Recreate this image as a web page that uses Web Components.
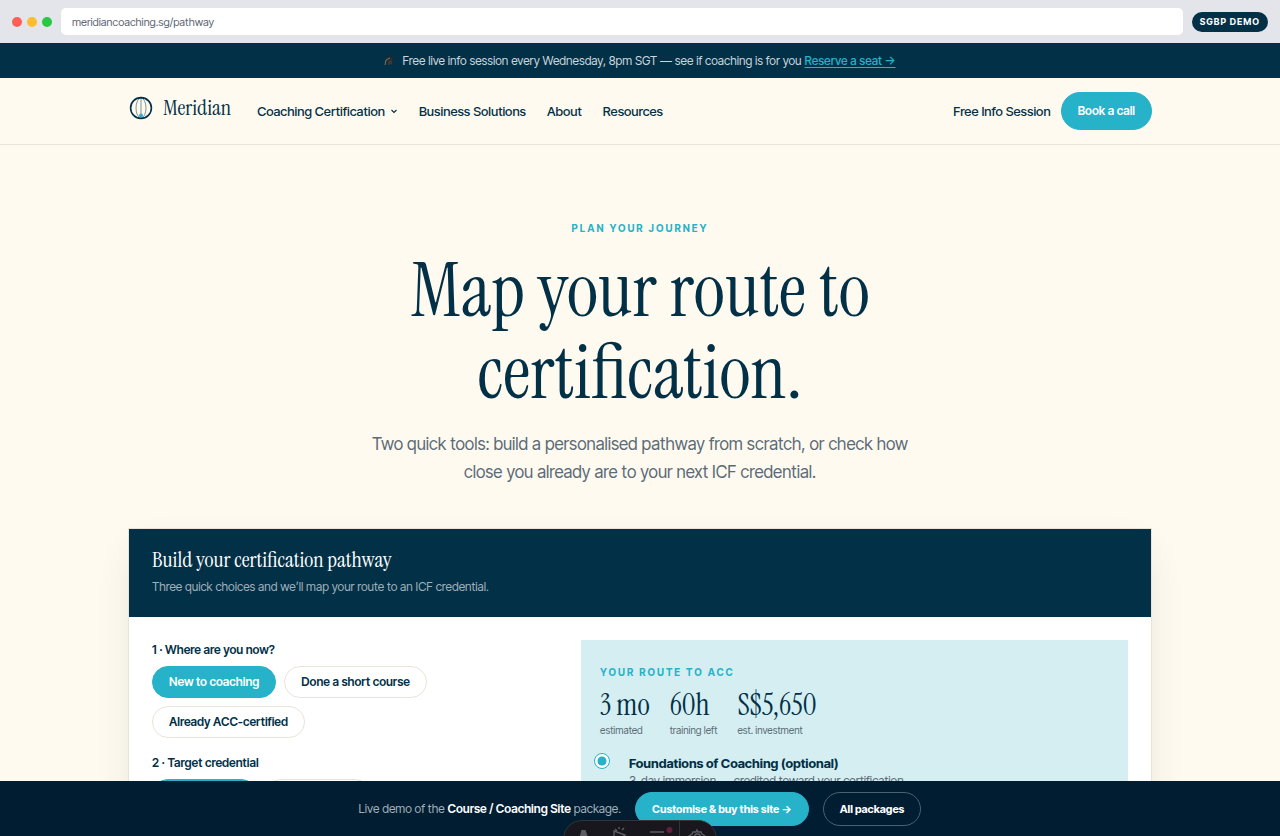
<!DOCTYPE html>
<html lang="en">
<head>
<meta charset="utf-8">
<meta name="viewport" content="width=device-width, initial-scale=1">
<title>Meridian - Map your route to certification</title>
<style>
    :root {
        --navy: #023047;
        --ink: #001d31;
        --teal: #26b2c8;
        --cream: #fffaef;
        --line: #e8e4d9;
        --muted: #5b6b77;
        --sans: "Inter Tight", Inter, "Liberation Sans", sans-serif;
        --serif: "Instrument Serif", "Liberation Serif", serif;
        --page: 1024px;
    }

    body {
        margin: 0;
        min-height: 100vh;
        background: var(--cream);
        color: var(--navy);
        font: 13px/20px var(--sans);
    }

    demo-bar b {
        color: #fff;
        font-weight: 600;
    }
</style>
</head>
<body>

<browser-bar url="meridiancoaching.sg/pathway">SGBP DEMO</browser-bar>

<info-banner>
    Free live info session every Wednesday, 8pm SGT — see if coaching is for you
    <a slot="link" href="#session">Reserve a seat →</a>
</info-banner>

<site-header name="Meridian">
    <nav-link href="#certification" menu>Coaching Certification</nav-link>
    <nav-link href="#business">Business Solutions</nav-link>
    <nav-link href="#about">About</nav-link>
    <nav-link href="#resources">Resources</nav-link>
    <nav-link slot="end" href="#session">Free Info Session</nav-link>
    <pill-link slot="end" href="#call">Book a call</pill-link>
</site-header>

<page-hero>
    <span slot="eyebrow">Plan your journey</span>
    <span slot="title">Map your route to certification.</span>
    Two quick tools: build a personalised pathway from scratch, or check how close you already are to your next ICF credential.
</page-hero>

<pathway-builder>
    <span slot="title">Build your certification pathway</span>
    <span slot="intro">Three quick choices and we’ll map your route to an ICF credential.</span>

    <choice-group label="1 · Where are you now?">
        <choice-chip selected>New to coaching</choice-chip>
        <choice-chip>Done a short course</choice-chip>
        <choice-chip>Already ACC-certified</choice-chip>
    </choice-group>
    <choice-group label="2 · Target credential">
        <choice-chip selected>ACC (Level 1)</choice-chip>
        <choice-chip>PCC (Level 2)</choice-chip>
    </choice-group>

    <route-panel slot="route" heading="Your route to ACC">
        <route-stat slot="stats" value="3 mo">estimated</route-stat>
        <route-stat slot="stats" value="60h">training left</route-stat>
        <route-stat slot="stats" value="S$5,650">est. investment</route-stat>
        <route-step heading="Foundations of Coaching (optional)">3-day immersion — credited toward your certification.</route-step>
    </route-panel>
</pathway-builder>

<demo-bar>
    <span>Live demo of the <b>Course / Coaching Site</b> package.</span>
    <pill-link slot="actions" href="#buy" compact>Customise &amp; buy this site →</pill-link>
    <pill-link slot="actions" href="#packages" compact outline>All packages</pill-link>
</demo-bar>

<tool-dock></tool-dock>

<script>
class BaseElement extends HTMLElement {
    constructor() {
        super()
        this._shadowRoot = this.attachShadow({ mode: 'open' })
    }

    connectedCallback() {
        this._shadowRoot.innerHTML = this.render()
    }

    attr(name) {
        return this.getAttribute(name) || ''
    }
}

class BrowserBar extends BaseElement {
    render() {
        return `
<style>
    :host {
        display: flex;
        align-items: center;
        gap: 9px;
        height: 43px;
        padding: 0 12px;
        background: #e4e5eb;
    }

    .dots {
        display: flex;
        gap: 5px;
    }

    i {
        width: 10px;
        height: 10px;
        border-radius: 50%;
    }

    input {
        flex: 1;
        min-width: 0;
        height: 27px;
        box-sizing: border-box;
        padding: 0 11px;
        border: none;
        border-radius: 5px;
        background: #fff;
        color: #5d6673;
        font: 11px/16px var(--sans);
    }

    .badge {
        padding: 0 8px;
        border-radius: 10px;
        background: var(--navy);
        color: #fff;
        font-size: 9px;
        font-weight: 700;
        letter-spacing: 1px;
    }
</style>
<div class="dots">
    <i style="background: #ff5f57"></i>
    <i style="background: #febc2e"></i>
    <i style="background: #28c840"></i>
</div>
<input type="text" aria-label="Address" value="${this.attr('url')}" readonly>
<span class="badge"><slot></slot></span>`
    }
}

class InfoBanner extends BaseElement {
    render() {
        return `
<style>
    :host {
        display: flex;
        align-items: center;
        justify-content: center;
        gap: 3px;
        min-height: 35px;
        background: var(--navy);
        color: #c9d6dc;
        font-size: 12px;
    }

    svg {
        margin-right: 4px;
    }

    ::slotted(a) {
        color: var(--teal);
        font-weight: 500;
        text-underline-offset: 2px;
    }
</style>
<svg width="11" height="11" viewBox="0 0 11 11" aria-hidden="true">
    <path d="M1 4 5 1l5 2-4 4z" fill="#2b2a2c"/>
    <path d="M4 6v4l4-1V5z" fill="#3d3735"/>
    <path d="M6 3 2 5 1 10" fill="none" stroke="#8a7350"/>
</svg>
<span><slot></slot></span>
<slot name="link"></slot>`
    }
}

class SiteHeader extends BaseElement {
    render() {
        return `
<style>
    :host {
        display: block;
        border-bottom: 1px solid var(--line);
    }

    header {
        display: flex;
        align-items: center;
        justify-content: space-between;
        box-sizing: border-box;
        max-width: var(--page);
        min-height: 66px;
        margin: 0 auto;
    }

    .start {
        display: flex;
        align-items: center;
        gap: 26px;
    }

    .brand {
        display: flex;
        align-items: center;
        gap: 9px;
        padding-bottom: 6px;
        color: var(--navy);
        font: 22px/26px var(--serif);
        text-decoration: none;
    }

    nav {
        display: flex;
        gap: 21px;
    }

    .end {
        display: flex;
        align-items: center;
        gap: 10px;
    }
</style>
<header>
    <div class="start">
        <a class="brand" href="#home">
            <svg width="26" height="26" viewBox="0 0 26 26" fill="none" aria-hidden="true">
                <circle cx="13" cy="13" r="10.4" stroke="#023047" stroke-width="1.6"/>
                <ellipse cx="13" cy="13" rx="5" ry="10" stroke="#023047" opacity=".5"/>
                <path d="M13 3v18" stroke="#023047" opacity=".5"/>
                <circle cx="13" cy="20.5" r="2" fill="#26b2c8"/>
            </svg>
            ${this.attr('name')}
        </a>
        <nav><slot></slot></nav>
    </div>
    <div class="end"><slot name="end"></slot></div>
</header>`
    }
}

class NavLink extends BaseElement {
    render() {
        const caret = `
<svg width="8" height="8" viewBox="0 0 8 8" aria-hidden="true">
    <path d="M1.5 3 4 5.5 6.5 3" fill="none" stroke="currentColor" stroke-width="1.2"/>
</svg>`
        return `
<style>
    :host {
        display: block;
    }

    a {
        display: flex;
        align-items: center;
        gap: 5px;
        color: var(--navy);
        font-size: 13px;
        font-weight: 500;
        text-decoration: none;
        white-space: nowrap;
    }
</style>
<a href="${this.attr('href')}"><slot></slot>${this.hasAttribute('menu') ? caret : ''}</a>`
    }
}

class PillLink extends BaseElement {
    render() {
        return `
<style>
    :host {
        display: block;
    }

    a {
        display: block;
        padding: 8px 16px;
        border: 1px solid var(--teal);
        border-radius: 19px;
        background: var(--teal);
        color: #fff;
        font-size: 12px;
        font-weight: 600;
        text-decoration: none;
        white-space: nowrap;
    }

    :host([compact]) a {
        padding: 6px 16px;
        font-size: 11px;
        font-weight: 700;
    }

    :host([outline]) a {
        border-color: #4b6170;
        background: none;
    }
</style>
<a href="${this.attr('href')}"><slot></slot></a>`
    }
}

class PageHero extends BaseElement {
    render() {
        return `
<style>
    :host {
        display: block;
        max-width: 560px;
        margin: 0 auto;
        padding: 73px 24px 42px;
        text-align: center;
    }

    .eyebrow {
        color: var(--teal);
        font-size: 10px;
        font-weight: 700;
        letter-spacing: 2px;
        text-transform: uppercase;
    }

    h1 {
        margin: 12px 0 16px;
        font: 600 76px/82px var(--serif);
    }

    .lead {
        margin: 0;
        color: var(--muted);
        font-size: 17px;
        line-height: 28px;
    }
</style>
<div class="eyebrow"><slot name="eyebrow"></slot></div>
<h1><slot name="title"></slot></h1>
<p class="lead"><slot></slot></p>`
    }
}

class PathwayBuilder extends BaseElement {
    render() {
        return `
<style>
    :host {
        display: block;
        box-sizing: border-box;
        max-width: var(--page);
        margin: 0 auto 96px;
        border: 1px solid var(--line);
        background: #fff;
        box-shadow: 0 16px 40px -12px rgba(2, 48, 71, .16);
    }

    header {
        padding: 18px 23px 20px;
        background: var(--navy);
    }

    h2 {
        margin: 0 0 4px;
        color: #fff;
        font: 22px/26px var(--serif);
    }

    p {
        margin: 0;
        color: #9fb1bc;
        font-size: 12px;
    }

    .body {
        display: grid;
        grid-template-columns: 20fr 27fr;
        gap: 24px;
        padding: 23px;
    }

    .choices {
        display: flex;
        flex-direction: column;
        gap: 15px;
    }
</style>
<header>
    <h2><slot name="title"></slot></h2>
    <p><slot name="intro"></slot></p>
</header>
<div class="body">
    <div class="choices"><slot></slot></div>
    <slot name="route"></slot>
</div>`
    }
}

class ChoiceGroup extends BaseElement {
    render() {
        return `
<style>
    :host {
        display: block;
    }

    h3 {
        margin: 0 0 6px;
        font-size: 12px;
        font-weight: 600;
        line-height: 20px;
    }

    div {
        display: flex;
        flex-wrap: wrap;
        gap: 8px;
    }
</style>
<h3 id="label">${this.attr('label')}</h3>
<div role="group" aria-labelledby="label"><slot></slot></div>`
    }

    connectedCallback() {
        super.connectedCallback()
        this.addEventListener('click', this._select.bind(this))
    }

    _select(e) {
        const chip = e.target.closest('choice-chip')
        if(!chip) return
        this.querySelectorAll('choice-chip').forEach(c => c.toggleAttribute('selected', c === chip))
    }
}

class ChoiceChip extends BaseElement {
    static get observedAttributes() {
        return ['selected']
    }

    attributeChangedCallback() {
        const $button = this._shadowRoot.querySelector('button')
        if($button) $button.setAttribute('aria-pressed', this.hasAttribute('selected'))
    }

    render() {
        return `
<style>
    :host {
        display: block;
    }

    button {
        display: block;
        padding: 5px 16px;
        border: 1px solid var(--line);
        border-radius: 16px;
        background: #fff;
        color: var(--navy);
        font: 600 12px/20px var(--sans);
        cursor: pointer;
    }

    :host([selected]) button {
        border-color: var(--teal);
        background: var(--teal);
        color: #fff;
    }
</style>
<button type="button" aria-pressed="${this.hasAttribute('selected')}"><slot></slot></button>`
    }
}

class RoutePanel extends BaseElement {
    render() {
        return `
<style>
    :host {
        display: block;
        padding: 22px 19px;
        background: #d4eef1;
    }

    h3 {
        margin: 0 0 6px;
        color: var(--teal);
        font-size: 10px;
        font-weight: 700;
        line-height: 20px;
        letter-spacing: 2px;
        text-transform: uppercase;
    }

    .stats {
        display: flex;
        gap: 20px;
        margin-bottom: 15px;
    }
</style>
<h3>${this.attr('heading')}</h3>
<div class="stats"><slot name="stats"></slot></div>
<slot></slot>`
    }
}

class RouteStat extends BaseElement {
    render() {
        return `
<style>
    :host {
        display: block;
        color: var(--muted);
        font-size: 10px;
        line-height: 16px;
    }

    b {
        display: block;
        color: var(--navy);
        font: 30px/34px var(--serif);
    }
</style>
<b>${this.attr('value')}</b>
<slot></slot>`
    }
}

class RouteStep extends BaseElement {
    render() {
        return `
<style>
    :host {
        display: flex;
        align-items: flex-start;
        gap: 19px;
        margin-left: -6px;
        color: var(--muted);
        font-size: 12px;
        line-height: 16px;
    }

    h4 {
        margin: 0;
        color: var(--navy);
        font-size: 13px;
        font-weight: 700;
        line-height: 20px;
    }
</style>
<svg width="16" height="16" viewBox="0 0 16 16" aria-hidden="true">
    <circle cx="8" cy="8" r="7.5" fill="#fff" stroke="#26b2c8"/>
    <circle cx="8" cy="8" r="4.5" fill="#26b2c8"/>
</svg>
<div>
    <h4>${this.attr('heading')}</h4>
    <slot></slot>
</div>`
    }
}

class DemoBar extends BaseElement {
    render() {
        return `
<style>
    :host {
        position: fixed;
        left: 0;
        right: 0;
        bottom: 0;
        display: flex;
        align-items: center;
        justify-content: center;
        gap: 14px;
        min-height: 55px;
        background: var(--ink);
        color: #a3b0ba;
        font-size: 12px;
    }
</style>
<slot></slot>
<slot name="actions"></slot>`
    }
}

class ToolDock extends BaseElement {
    render() {
        return `
<style>
    :host {
        position: fixed;
        left: 0;
        right: 0;
        bottom: -22px;
        display: flex;
        justify-content: center;
        pointer-events: none;
    }

    div {
        display: flex;
        box-sizing: border-box;
        height: 38px;
        border: 1px solid #33343a;
        border-radius: 19px;
        background: #17171d;
    }
</style>
<div>
    <svg width="152" height="36" viewBox="0 0 152 36" fill="none" stroke="#5d5d62" stroke-width="1.4" aria-hidden="true">
        <path d="M14 22 17.500 9h4L26 22h-4l-2.500-6-2.500 6z" fill="#5d5d62" stroke="none"/>
        <path d="M50 24V10l11 4-4 3M51 8l2 2M55 6v2M60 7l-2 2"/>
        <path d="M86 11h14M90 17h10"/>
        <circle cx="105.500" cy="9" r="3" fill="#64203a" stroke="none"/>
        <path d="M115.500 0v36" stroke="#33343a" stroke-width="1"/>
        <path d="M126 18l-1-3 3-2 1-2 3 0 1-2 1 2 3 0 1 2 3 2-1 3"/>
        <circle cx="133.500" cy="16" r="3"/>
    </svg>
</div>`
    }
}

const elements = {
    'browser-bar': BrowserBar,
    'info-banner': InfoBanner,
    'site-header': SiteHeader,
    'nav-link': NavLink,
    'pill-link': PillLink,
    'page-hero': PageHero,
    'pathway-builder': PathwayBuilder,
    'choice-group': ChoiceGroup,
    'choice-chip': ChoiceChip,
    'route-panel': RoutePanel,
    'route-stat': RouteStat,
    'route-step': RouteStep,
    'demo-bar': DemoBar,
    'tool-dock': ToolDock
}

Object.keys(elements).forEach(name => window.customElements.define(name, elements[name]))
</script>
</body>
</html>
